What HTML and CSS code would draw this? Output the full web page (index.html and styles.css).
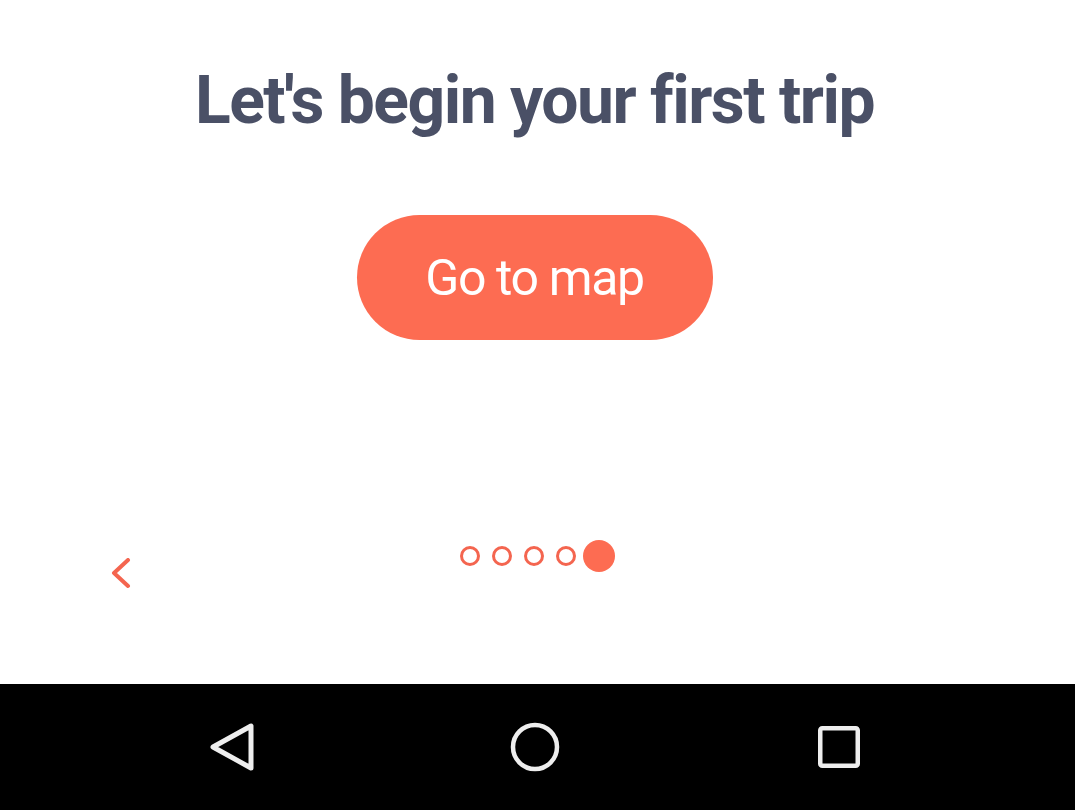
FILE: index.html
```html
<!DOCTYPE html>
<html>
<head>
<meta charset="utf-8">
<link rel="stylesheet" href="styles.css">
</head>
<body>
<div class="screen">
  <main class="content">
    <h1 class="title">Let's begin your first trip</h1>
    <button class="cta">Go to map</button>
    <div class="footer">
      <div class="back">
        <svg width="20" height="31" viewBox="0 0 20 31"><path d="M17 2 L3 15 L17 28" fill="none" stroke="#f4654f" stroke-width="4" stroke-linecap="round" stroke-linejoin="round"/></svg>
      </div>
      <div class="dots">
        <span class="dot"></span>
        <span class="dot"></span>
        <span class="dot"></span>
        <span class="dot"></span>
        <span class="dot active"></span>
      </div>
      <div class="spacer"></div>
    </div>
  </main>
  <nav class="navbar">
    <svg class="nav-icon nav-back" width="50" height="50" viewBox="0 0 50 50"><path d="M43 4 L43 46 L5 25 Z" fill="none" stroke="#eeeeee" stroke-width="5" stroke-linejoin="round"/></svg>
    <svg class="nav-icon nav-home" width="52" height="52" viewBox="0 0 52 52"><circle cx="26" cy="26" r="22" fill="none" stroke="#eeeeee" stroke-width="4.5"/></svg>
    <svg class="nav-icon nav-recent" width="42" height="42" viewBox="0 0 42 42"><rect x="2.25" y="2.25" width="37.5" height="37.5" rx="2" fill="none" stroke="#eeeeee" stroke-width="4.5"/></svg>
  </nav>
</div>
</body>
</html>
```

FILE: styles.css
```css
html, body {
  margin: 0;
  padding: 0;
  background: #ffffff;
}
.screen {
  width: 1075px;
  height: 810px;
  display: flex;
  flex-direction: column;
  font-family: Roboto, "Liberation Sans", sans-serif;
}
.content {
  height: 684px;
  display: flex;
  flex-direction: column;
  align-items: center;
  background: #ffffff;
}
.title {
  margin: 68px 6px 0 0;
  font-size: 66px;
  line-height: 66px;
  font-weight: 700;
  color: #4a5066;
  letter-spacing: -1.5px;
}
.cta {
  margin: 81px 6px 0 0;
  width: 356px;
  height: 125px;
  border: none;
  border-radius: 63px;
  background: #fd6c52;
  color: #ffffff;
  font-family: Roboto, "Liberation Sans", sans-serif;
  font-size: 50px;
  font-weight: 400;
  letter-spacing: -1.4px;
  padding: 0;
}
.footer {
  margin-top: 200px;
  width: 100%;
  display: flex;
  align-items: flex-start;
}
.back {
  width: 214px;
  padding-left: 111px;
  padding-top: 18px;
  box-sizing: border-box;
  height: 50px;
}
.back svg {
  display: block;
}
.spacer {
  width: 214px;
}
.dots {
  flex: 1;
  display: flex;
  justify-content: center;
  align-items: center;
  gap: 12px;
  height: 32px;
}
.dot {
  width: 14px;
  height: 14px;
  border: 3px solid #f4654f;
  border-radius: 50%;
}
.dot.active {
  width: 32px;
  height: 32px;
  border: none;
  background: #fd6c52;
  margin-left: -5.5px;
}
.navbar {
  height: 126px;
  background: #000000;
  display: flex;
  align-items: center;
  padding: 0 0 0 208px;
}
.nav-icon {
  display: block;
  flex: none;
}
.nav-home {
  margin-left: 251px;
}
.nav-recent {
  margin-left: 257px;
}
```
